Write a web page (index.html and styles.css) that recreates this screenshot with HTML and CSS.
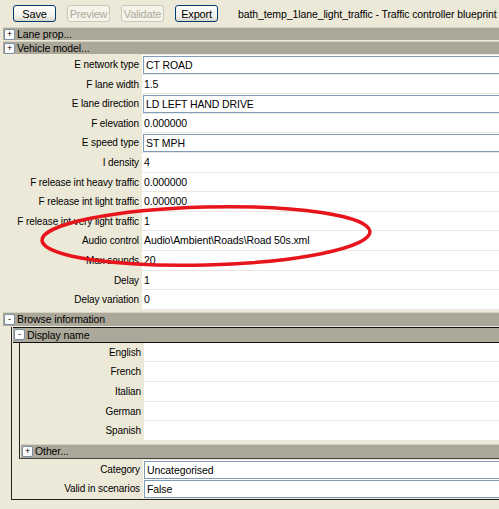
FILE: index.html
```html
<!DOCTYPE html>
<html lang="en">

<head>
    <meta charset="UTF-8">
    <title>Traffic controller blueprint</title>
    <link rel="stylesheet" href="styles.css">
</head>

<body>
    <div class="toolbar">
        <button class="btn">Save</button>
        <button class="btn" disabled>Preview</button>
        <button class="btn" disabled>Validate</button>
        <button class="btn">Export</button>
        <span class="title">bath_temp_1lane_light_traffic - Traffic controller blueprint</span>
    </div>

    <div class="header"><span class="toggle">+</span>Lane prop...</div>
    <div class="header"><span class="toggle">+</span>Vehicle model...</div>

    <div class="props">
        <div class="row"><div class="label">E network type</div><div class="value"><div class="box">CT ROAD</div></div></div>
        <div class="row"><div class="label">F lane width</div><div class="value">1.5</div></div>
        <div class="row"><div class="label">E lane direction</div><div class="value"><div class="box">LD LEFT HAND DRIVE</div></div></div>
        <div class="row"><div class="label">F elevation</div><div class="value">0.000000</div></div>
        <div class="row"><div class="label">E speed type</div><div class="value"><div class="box">ST MPH</div></div></div>
        <div class="row"><div class="label">I density</div><div class="value">4</div></div>
        <div class="row"><div class="label">F release int heavy traffic</div><div class="value">0.000000</div></div>
        <div class="row"><div class="label">F release int light traffic</div><div class="value">0.000000</div></div>
        <div class="row"><div class="label">F release int very light traffic</div><div class="value">1</div></div>
        <div class="row"><div class="label">Audio control</div><div class="value">Audio\Ambient\Roads\Road 50s.xml</div></div>
        <div class="row"><div class="label">Max sounds</div><div class="value">20</div></div>
        <div class="row"><div class="label">Delay</div><div class="value">1</div></div>
        <div class="row"><div class="label">Delay variation</div><div class="value">0</div></div>

        <!-- red ring marked over the screenshot -->
        <svg class="circle" width="360" height="84" viewBox="0 0 360 84">
            <ellipse cx="170" cy="42" rx="164" ry="29" transform="rotate(-1.5 170 42)" fill="none" stroke="#e8141b" stroke-width="3.5" />
        </svg>
    </div>

    <div class="header browse-head"><span class="toggle">-</span>Browse information</div>
    <div class="group">
        <div class="header sub-head"><span class="toggle">-</span>Display name</div>
        <div class="subgroup">
            <div class="row"><div class="label">English</div><div class="value"></div></div>
            <div class="row"><div class="label">French</div><div class="value"></div></div>
            <div class="row"><div class="label">Italian</div><div class="value"></div></div>
            <div class="row"><div class="label">German</div><div class="value"></div></div>
            <div class="row"><div class="label">Spanish</div><div class="value"></div></div>
            <div class="header other-head"><span class="toggle">+</span>Other...</div>
        </div>
        <div class="row"><div class="label">Category</div><div class="value"><div class="box">Uncategorised</div></div></div>
        <div class="row"><div class="label">Valid in scenarios</div><div class="value"><div class="box">False</div></div></div>
    </div>
</body>

</html>
```

FILE: styles.css
```css
body {
    margin: 0;
    width: 520px;
    background-color: #ece9d8;
    font-family: "Liberation Sans", Arial, sans-serif;
    font-size: 10px;
    letter-spacing: -0.1px;
    color: #000;
    overflow: hidden;
}

.toolbar {
    display: flex;
    align-items: center;
    height: 27px;
    padding-left: 13px;
}

.btn {
    width: 43px;
    height: 17px;
    margin-right: 11px;
    padding: 0;
    font-family: inherit;
    font-size: 11px;
    letter-spacing: -0.2px;
    color: #000;
    background: linear-gradient(#ffffff, #f0efe8 70%, #d8d5c8);
    border: 1px solid #003c74;
    border-radius: 3px;
}

.btn:disabled {
    color: #aca899;
    border-color: #c9c7ba;
    background: #f5f4ea;
}

.title {
    margin-left: 9px;
    font-size: 10.5px;
}

.header {
    display: flex;
    align-items: center;
    height: 12px;
    margin: 0 0 1px 3px;
    background-color: #aca899;
    border-top: 1px solid #d5d2c4;
    font-size: 10.5px;
}

.toggle {
    display: inline-flex;
    align-items: center;
    justify-content: center;
    width: 9px;
    height: 9px;
    margin: 0 2px 0 1px;
    font-size: 9px;
    line-height: 9px;
    background-color: #fff;
    border: 1px solid #7a8ea8;
    border-radius: 2px;
}

.props {
    position: relative;
    margin-top: 1px;
}

.row {
    display: grid;
    grid-template-columns: 142px 1fr;
    height: 19.6px;
}

.label {
    text-align: right;
    padding-right: 3px;
    line-height: 19.6px;
    white-space: nowrap;
}

.value {
    background-color: #fff;
    border-bottom: 1px solid #e9e7e0;
    padding-left: 2px;
    line-height: 18.6px;
    white-space: nowrap;
    font-size: 10.5px;
}

.value .box {
    height: 16px;
    margin: 1px 0 0 -1px;
    padding-left: 2px;
    border: 1px solid #7f9db9;
    line-height: 16px;
}

.circle {
    position: absolute;
    left: 36px;
    top: 139px;
}

.browse-head {
    margin-top: 2px;
    height: 13px;
}

.group {
    margin-left: 11px;
    border-left: 1px solid #222;
    border-bottom: 1px solid #222;
    margin-bottom: 10px;
}

.group .row {
    grid-template-columns: 131px 1fr;
}

.sub-head {
    margin: 0 0 0 1px;
    height: 14px;
    border-top: 1px solid #111;
    border-bottom: 1px solid #111;
}

.subgroup {
    margin-left: 7px;
    margin-bottom: 1px;
    border-left: 1px solid #222;
    border-bottom: 1px solid #444;
}

.subgroup .row {
    grid-template-columns: 124px 1fr;
}

.other-head {
    margin: 3px 0 0 1px;
    height: 13px;
}
```
